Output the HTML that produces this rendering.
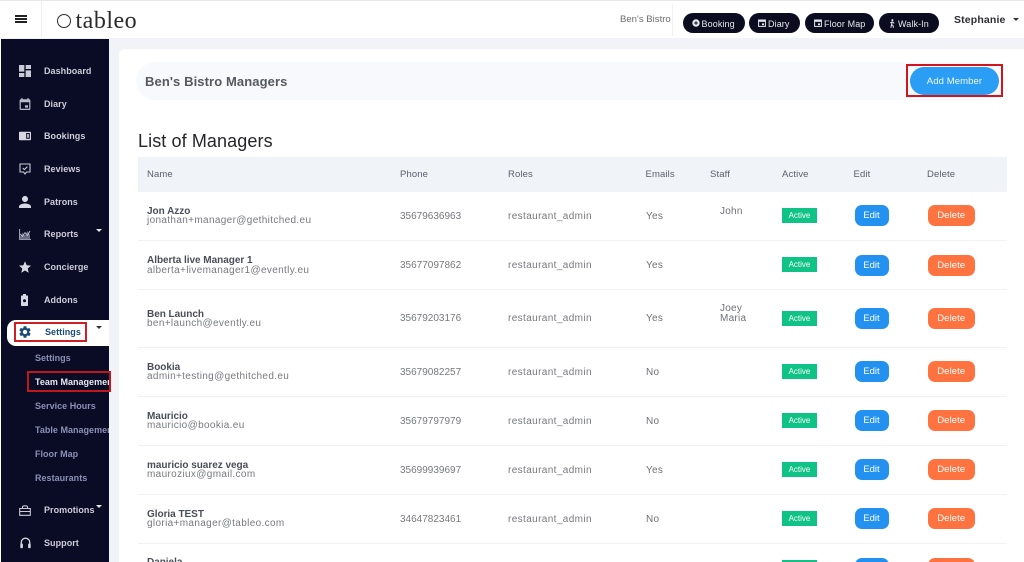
<!DOCTYPE html>
<html lang="en"><head><meta charset="utf-8"><title>Tableo</title>
<style>
*{box-sizing:border-box}
html,body{margin:0;padding:0;width:1024px;height:562px;overflow:hidden}
#w{position:relative;width:1024px;height:562px;overflow:hidden;background:#f1f3f9;font-family:"Liberation Sans",sans-serif}
.a{position:absolute}
.t{position:absolute;white-space:nowrap;line-height:12px;height:12px;margin-top:1px}
svg{position:absolute;display:block}
.m{left:44px;font-size:9px;font-weight:bold;color:#ccced9;letter-spacing:.05px;margin-top:0}
.s{left:35px;font-size:9px;font-weight:bold;color:#8c90b8;letter-spacing:.02px;margin-top:0}
.h{font-size:9.5px;color:#5a5f6a;letter-spacing:.12px}
.n{left:147px;font-size:10px;font-weight:bold;color:#4a4d58;letter-spacing:-.03px}
.e{left:147px;font-size:10px;color:#77797f;letter-spacing:.35px}
.p{left:400px;font-size:10px;color:#77797f}
.r{left:508px;font-size:10px;color:#77797f;letter-spacing:.38px}
.y{left:646px;font-size:10px;color:#6f7177;letter-spacing:.25px}
.f{left:720px;font-size:10px;color:#6f7177;letter-spacing:.25px}
.l{position:absolute;left:138px;width:869px;height:1px;background:#f0f1f5}
.b{position:absolute;left:782px;width:35px;height:15px;background:#0fc386;color:#fff;font-size:8px;line-height:16px;text-align:center}
.ed{position:absolute;left:854.5px;width:34px;height:21px;border-radius:7px;background:#2391ef;color:#fff;font-size:9.5px;line-height:22px;text-align:center}
.de{position:absolute;left:928px;width:46.5px;height:21px;border-radius:7px;background:#ff7340;color:#fff;font-size:9.5px;line-height:22px;text-align:center;letter-spacing:.1px}
.pill{position:absolute;top:13px;height:20px;border-radius:10px;background:#0b0c20}
.pt{position:absolute;top:5px;line-height:12px;font-size:9px;color:#e6e7ee;white-space:nowrap;letter-spacing:.1px}
</style></head><body><div id="w">

<!-- top bar -->
<div class="a" style="left:0;top:0;width:1024px;height:38px;background:#fff;border-top:1px solid #e8e8ea"></div>
<div class="a" style="left:41px;top:1px;width:1px;height:37px;background:#f0f0f3"></div>
<div class="a" style="left:15px;top:15px;width:12px;height:2px;background:#222"></div>
<div class="a" style="left:15px;top:18px;width:12px;height:2px;background:#222"></div>
<div class="a" style="left:15px;top:21px;width:12px;height:2px;background:#222"></div>
<div class="a" style="left:57px;top:13.5px;width:14px;height:14px;border:1.3px solid #2b2b2b;border-radius:50%"></div>
<div class="t" style="left:75.5px;top:7px;height:26px;line-height:26px;font-family:'Liberation Serif',serif;font-size:24px;color:#2b2b2b;letter-spacing:.5px">tableo</div>
<div class="t" style="left:620px;top:13px;font-size:9.5px;color:#6b6b6b;letter-spacing:.03px">Ben's Bistro</div>
<div class="a" style="left:672px;top:4px;width:1px;height:32px;background:#f2f2f4"></div>

<div class="pill" style="left:682.5px;width:62px">
<svg style="left:9px;top:6px" width="8" height="8" viewBox="0 0 8 8"><circle cx="4" cy="4" r="3.7" fill="#e6e7ee"/><path d="M4 2.2v3.6M2.2 4h3.6" stroke="#0b0c20" stroke-width="1"/></svg>
<span class="pt" style="left:19px">Booking</span></div>
<div class="pill" style="left:749px;width:50.5px">
<svg style="left:9px;top:6px" width="8" height="8" viewBox="0 0 8 8"><rect x=".6" y="1" width="6.8" height="6.4" fill="none" stroke="#e6e7ee" stroke-width="1"/><rect x=".6" y="1" width="6.8" height="1.8" fill="#e6e7ee"/><rect x="4" y="4.4" width="2" height="1.8" fill="#e6e7ee"/></svg>
<span class="pt" style="left:19px">Diary</span></div>
<div class="pill" style="left:805px;width:69px">
<svg style="left:9px;top:6px" width="8" height="8" viewBox="0 0 8 8"><rect x=".6" y="1" width="6.8" height="6.4" fill="none" stroke="#e6e7ee" stroke-width="1"/><rect x=".6" y="1" width="6.8" height="1.8" fill="#e6e7ee"/><rect x="4" y="4.4" width="2" height="1.8" fill="#e6e7ee"/></svg>
<span class="pt" style="left:19px">Floor Map</span></div>
<div class="pill" style="left:879px;width:60px">
<svg style="left:9px;top:5.5px" width="8" height="9" viewBox="0 0 8 9"><circle cx="4.4" cy="1.1" r="1" fill="#e6e7ee"/><path d="M4.2 2.5L3.6 5.5 5 6.6 5.4 8.8M3.6 5.5L2.8 8.8M4.2 2.8L2.2 4M4.3 2.8L6.2 4.4" fill="none" stroke="#e6e7ee" stroke-width="1"/></svg>
<span class="pt" style="left:19px">Walk-In</span></div>

<div class="t" style="left:954px;top:13px;font-size:10.5px;font-weight:bold;color:#2c2c34;letter-spacing:.15px">Stephanie</div>
<div class="a" style="left:1013px;top:18px;width:0;height:0;border-left:3px solid transparent;border-right:3px solid transparent;border-top:3px solid #333"></div>

<!-- sidebar -->
<div class="a" style="left:0;top:38px;width:1px;height:524px;background:#fff"></div>
<div class="a" style="left:1px;top:39px;width:108px;height:523px;background:#0a0b24"></div>

<svg style="left:19px;top:65px" width="12" height="12" viewBox="3 3 18 18"><path fill="#c9cbd6" d="M3 13h8V3H3v10zm0 8h8v-6H3v6zm10 0h8V11h-8v10zm0-18v6h8V3h-8z"/></svg>
<div class="t m" style="top:65px">Dashboard</div>

<svg style="left:19px;top:98px" width="12" height="12" viewBox="3 1 18 20"><path fill="#b9bbc9" d="M19 3h-1V1h-2v2H8V1H6v2H5c-1.11 0-1.99.9-1.99 2L3 19c0 1.1.89 2 2 2h14c1.1 0 2-.9 2-2V5c0-1.1-.9-2-2-2zm0 16H5V8h14v11zM12 13h5v4h-5z"/></svg>
<div class="t m" style="top:98px">Diary</div>

<svg style="left:19px;top:131px" width="12" height="10" viewBox="0 0 12 10"><rect width="12" height="8.5" y=".7" rx=".8" fill="#d6d8e2"/><rect x="7.2" y="2" width="3.6" height="5.8" fill="#0a0b24"/><rect x="8.2" y="3" width="1.6" height="3.8" fill="#d6d8e2"/></svg>
<div class="t m" style="top:130px">Bookings</div>

<svg style="left:19px;top:163px" width="12" height="13" viewBox="0 0 12 13"><path d="M1 1h10v8H7.5L6 11 4.5 9H1z" fill="none" stroke="#c9cbd6" stroke-width="1.1"/><path d="M3.8 5l1.600 1.600 3-3" fill="none" stroke="#c9cbd6" stroke-width="1.1"/></svg>
<div class="t m" style="top:163px">Reviews</div>

<svg style="left:19px;top:196px" width="12" height="12" viewBox="4 4 16 16"><path fill="#d6d8e2" d="M12 12c2.21 0 4-1.79 4-4s-1.79-4-4-4-4 1.79-4 4 1.79 4 4 4zm0 2c-2.67 0-8 1.34-8 4v2h16v-2c0-2.66-5.33-4-8-4z"/></svg>
<div class="t m" style="top:196px">Patrons</div>

<svg style="left:19px;top:229px" width="12" height="11" viewBox="0 0 12 11"><path d="M.6 0v10.4H12" fill="none" stroke="#a9abbd" stroke-width="1"/><path d="M1 8l2.5-4.500L6 6.500 8.500 2 11 6v4H1z" fill="#6a6c85"/><path d="M1 5l2.500 2.500L6 3.500l2.500 3L11 2" fill="none" stroke="#c9cbd6" stroke-width=".8"/></svg>
<div class="t m" style="top:228px">Reports</div>
<div class="a" style="left:96px;top:229px;width:0;height:0;border-left:3.5px solid transparent;border-right:3.5px solid transparent;border-top:3.5px solid #e6e7ee"></div>

<svg style="left:19px;top:261px" width="12" height="12" viewBox="2 2 20 19"><path fill="#d6d8e2" d="M12 17.27L18.18 21l-1.64-7.03L22 9.24l-7.19-.61L12 2 9.19 8.63 2 9.24l5.46 4.73L5.82 21z"/></svg>
<div class="t m" style="top:261px">Concierge</div>

<svg style="left:21px;top:294px" width="7" height="12" viewBox="0 0 7 12"><rect x="2" y="0" width="3" height="2" fill="#d6d8e2"/><rect y="1.5" width="7" height="10.5" rx=".6" fill="#d6d8e2"/><circle cx="3.5" cy="6.8" r="1.5" fill="#0a0b24"/></svg>
<div class="t m" style="top:294px">Addons</div>

<div class="a" style="left:7px;top:320px;width:102px;height:26px;background:#fff;border-radius:9px 0 0 9px"></div>
<div class="a" style="left:14px;top:322px;width:73px;height:20px;border:2px solid #cc1f26"></div>
<svg style="left:19px;top:326px" width="12" height="12" viewBox="2.5 2 19 20"><path fill="#1c4a78" d="M19.14 12.94c.04-.3.06-.61.06-.94 0-.32-.02-.64-.07-.94l2.03-1.58c.18-.14.23-.41.12-.61l-1.92-3.32c-.12-.22-.37-.29-.59-.22l-2.39.96c-.5-.38-1.03-.7-1.62-.94l-.36-2.54c-.04-.24-.24-.41-.48-.41h-3.84c-.24 0-.43.17-.47.41l-.36 2.54c-.59.24-1.13.57-1.62.94l-2.39-.96c-.22-.08-.47 0-.59.22L2.74 8.87c-.12.21-.08.47.12.61l2.03 1.58c-.05.3-.09.63-.09.94s.02.64.07.94l-2.03 1.58c-.18.14-.23.41-.12.61l1.92 3.32c.12.22.37.29.59.22l2.39-.96c.5.38 1.03.7 1.62.94l.36 2.54c.05.24.24.41.48.41h3.84c.24 0 .44-.17.47-.41l.36-2.54c.59-.24 1.13-.56 1.62-.94l2.39.96c.22.08.47 0 .59-.22l1.92-3.32c.12-.22.07-.47-.12-.61l-2.01-1.58zM12 15.6c-1.98 0-3.6-1.62-3.6-3.6s1.62-3.6 3.6-3.6 3.6 1.62 3.6 3.6-1.62 3.6-3.6 3.6z"/></svg>
<div class="t" style="left:45px;top:326px;margin-top:0;font-size:9px;font-weight:bold;color:#1c4a78;letter-spacing:.05px">Settings</div>
<div class="a" style="left:96px;top:326px;width:0;height:0;border-left:3.5px solid transparent;border-right:3.5px solid transparent;border-top:3.5px solid #333"></div>

<div class="t s" style="top:352px">Settings</div>
<div class="a" style="left:27px;top:371px;width:84px;height:21px;border:2px solid #c0161e;z-index:3"></div>
<div class="a" style="left:35px;top:376px;width:74px;height:12px;overflow:hidden;white-space:nowrap;line-height:12px;font-size:9px;font-weight:bold;color:#e8e9f0;letter-spacing:.02px">Team Management</div>
<div class="t s" style="top:400px">Service Hours</div>
<div class="a s" style="top:424px;width:74px;height:12px;overflow:hidden;white-space:nowrap;line-height:12px">Table Management</div>
<div class="t s" style="top:448px">Floor Map</div>
<div class="t s" style="top:472px">Restaurants</div>

<svg style="left:19px;top:504px" width="12" height="12" viewBox="0 0 12 12"><path d="M.7 4.5h10.6v6.800H.7z M.7 7.500h10.600 M3.500 4.500V2.700C3.500 1.500 8.500 1.500 8.500 2.700v1.800" fill="none" stroke="#c9cbd6" stroke-width="1.1"/></svg>
<div class="t m" style="top:504px">Promotions</div>
<div class="a" style="left:96px;top:505px;width:0;height:0;border-left:3.5px solid transparent;border-right:3.5px solid transparent;border-top:3.5px solid #e6e7ee"></div>

<svg style="left:20px;top:537px" width="11" height="13" viewBox="0 0 11 13"><path d="M1.200 8V5.500a4.300 4.300 0 0 1 8.600 0V8" fill="none" stroke="#d6d8e2" stroke-width="1.3"/><rect x=".3" y="6.5" width="2.6" height="4.8" rx="1" fill="#d6d8e2"/><rect x="8.1" y="6.5" width="2.6" height="4.8" rx="1" fill="#d6d8e2"/></svg>
<div class="t m" style="top:537px">Support</div>

<!-- main card -->
<div class="a" style="left:119px;top:49px;width:905px;height:513px;background:#fff;border-radius:6px 0 0 0"></div>
<div class="a" style="left:136px;top:62px;width:869px;height:38px;background:#f8f9fc;border-radius:19px"></div>
<div class="t" style="left:145px;top:73px;height:15px;line-height:15px;font-size:13px;font-weight:bold;color:#55585f;letter-spacing:.1px">Ben's Bistro Managers</div>
<div class="a" style="left:906px;top:64px;width:97px;height:33px;border:2px solid #d3141c"></div>
<div class="a" style="left:910px;top:67px;width:89px;height:28px;border-radius:14px;background:#2a9df4;color:#f2f8ff;font-size:9.5px;line-height:29px;text-align:center;letter-spacing:.1px">Add Member</div>
<div class="t" style="left:138px;top:130px;height:21px;line-height:21px;font-size:18px;color:#25252b;letter-spacing:.1px">List of Managers</div>

<!-- table header -->
<div class="a" style="left:138px;top:157px;width:869px;height:35px;background:#f0f3f8"></div>
<div class="t h" style="left:147px;top:168px">Name</div>
<div class="t h" style="left:400px;top:168px">Phone</div>
<div class="t h" style="left:508px;top:168px">Roles</div>
<div class="t h" style="left:645.5px;top:168px">Emails</div>
<div class="t h" style="left:710px;top:168px">Staff</div>
<div class="t h" style="left:782px;top:168px">Active</div>
<div class="t h" style="left:853.5px;top:168px">Edit</div>
<div class="t h" style="left:927px;top:168px">Delete</div>

<div class="l" style="top:240px"></div>
<div class="l" style="top:289px"></div>
<div class="l" style="top:347px"></div>
<div class="l" style="top:396px"></div>
<div class="l" style="top:445px"></div>
<div class="l" style="top:494px"></div>
<div class="l" style="top:543px"></div>

<!-- row 1 -->
<div class="t n" style="top:205px">Jon Azzo</div>
<div class="t e" style="top:214px">jonathan+manager@gethitched.eu</div>
<div class="t p" style="top:209.5px">35679636963</div>
<div class="t r" style="top:209.5px">restaurant_admin</div>
<div class="t y" style="top:209.5px">Yes</div>
<div class="t f" style="top:205px">John</div>
<div class="b" style="top:208px">Active</div><div class="ed" style="top:205px">Edit</div><div class="de" style="top:205px">Delete</div>

<!-- row 2 -->
<div class="t n" style="top:254px">Alberta live Manager 1</div>
<div class="t e" style="top:263.5px">alberta+livemanager1@evently.eu</div>
<div class="t p" style="top:259px">35677097862</div>
<div class="t r" style="top:259px">restaurant_admin</div>
<div class="t y" style="top:259px">Yes</div>
<div class="b" style="top:257px">Active</div><div class="ed" style="top:254.5px">Edit</div><div class="de" style="top:254.5px">Delete</div>

<!-- row 3 -->
<div class="t n" style="top:307.5px">Ben Launch</div>
<div class="t e" style="top:317px">ben+launch@evently.eu</div>
<div class="t p" style="top:312px">35679203176</div>
<div class="t r" style="top:312px">restaurant_admin</div>
<div class="t y" style="top:312px">Yes</div>
<div class="t f" style="top:301.5px">Joey</div>
<div class="t f" style="top:312px">Maria</div>
<div class="b" style="top:310.5px">Active</div><div class="ed" style="top:308px">Edit</div><div class="de" style="top:308px">Delete</div>

<!-- row 4 -->
<div class="t n" style="top:360.5px">Bookia</div>
<div class="t e" style="top:370px">admin+testing@gethitched.eu</div>
<div class="t p" style="top:365.5px">35679082257</div>
<div class="t r" style="top:365.5px">restaurant_admin</div>
<div class="t y" style="top:365.5px">No</div>
<div class="b" style="top:364px">Active</div><div class="ed" style="top:361px">Edit</div><div class="de" style="top:361px">Delete</div>

<!-- row 5 -->
<div class="t n" style="top:409.5px">Mauricio</div>
<div class="t e" style="top:419px">mauricio@bookia.eu</div>
<div class="t p" style="top:414.5px">35679797979</div>
<div class="t r" style="top:414.5px">restaurant_admin</div>
<div class="t y" style="top:414.5px">No</div>
<div class="b" style="top:413px">Active</div><div class="ed" style="top:410px">Edit</div><div class="de" style="top:410px">Delete</div>

<!-- row 6 -->
<div class="t n" style="top:458.5px">mauricio suarez vega</div>
<div class="t e" style="top:468px">mauroziux@gmail.com</div>
<div class="t p" style="top:463.5px">35699939697</div>
<div class="t r" style="top:463.5px">restaurant_admin</div>
<div class="t y" style="top:463.5px">Yes</div>
<div class="b" style="top:462px">Active</div><div class="ed" style="top:459px">Edit</div><div class="de" style="top:459px">Delete</div>

<!-- row 7 -->
<div class="t n" style="top:507.5px">Gloria TEST</div>
<div class="t e" style="top:517px">gloria+manager@tableo.com</div>
<div class="t p" style="top:512.5px">34647823461</div>
<div class="t r" style="top:512.5px">restaurant_admin</div>
<div class="t y" style="top:512.5px">No</div>
<div class="b" style="top:511px">Active</div><div class="ed" style="top:508px">Edit</div><div class="de" style="top:508px">Delete</div>

<!-- row 8 -->
<div class="t n" style="top:556px">Daniela</div>
<div class="b" style="top:560px">Active</div><div class="ed" style="top:557.5px">Edit</div><div class="de" style="top:557.5px">Delete</div>

</div></body></html>
